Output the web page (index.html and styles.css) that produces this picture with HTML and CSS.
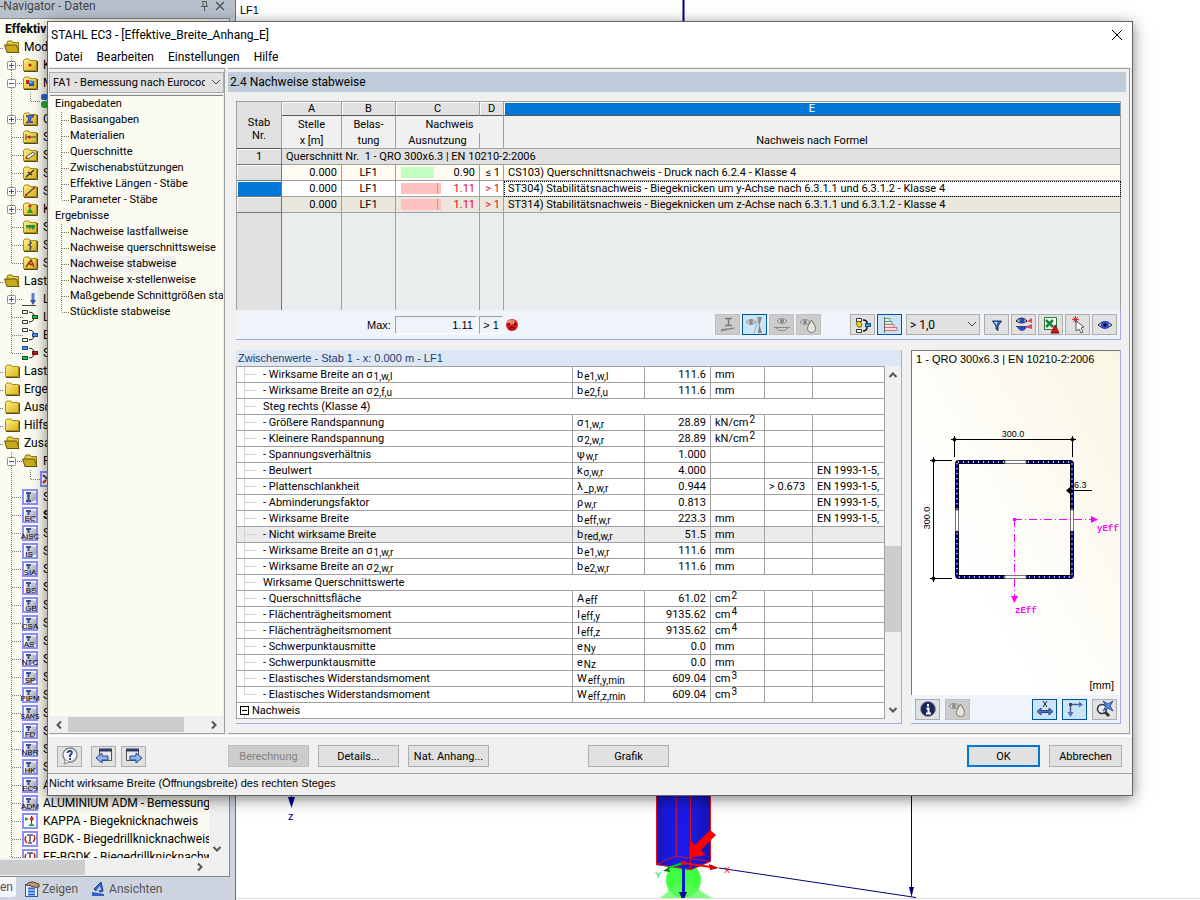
FILE: index.html
```html
<!DOCTYPE html>
<html lang="de">
<head>
  <meta charset="UTF-8">
  <meta name="viewport" content="width=device-width, initial-scale=1.0">
  <title>STAHL EC3</title>
  <link rel="stylesheet" href="styles.css">
</head>
<body>
  <!-- shared icons -->
  <svg class="defs" width="0" height="0">
    <defs>
      <linearGradient id="gold" x1="0" y1="0" x2="1" y2="1"><stop offset="0" stop-color="#fff08a"/><stop offset="1" stop-color="#d8b41c"/></linearGradient>
      <linearGradient id="metal" x1="0" y1="0" x2="1" y2="1"><stop offset="0" stop-color="#f4f6fa"/><stop offset="1" stop-color="#9498a4"/></linearGradient>
      <symbol id="tee" viewBox="0 0 24 18"><path d="M11.500 0V18M12 9.500H23" fill="none" stroke="#777" stroke-dasharray="1 1"/></symbol>
      <symbol id="end" viewBox="0 0 24 18"><path d="M11.500 0V9M12 9.500H23" fill="none" stroke="#777" stroke-dasharray="1 1"/></symbol>
      <symbol id="plus" viewBox="0 0 24 18"><path d="M11.500 0V18M17 9.500H23" fill="none" stroke="#777" stroke-dasharray="1 1"/><rect x="7.500" y="5.500" width="8" height="8" rx="1" fill="#fff" stroke="#8c8c8c"/><path d="M9 9.500H14M11.500 7V12" stroke="#3a52a4"/></symbol>
      <symbol id="minus" viewBox="0 0 24 18"><path d="M11.500 0V18M17 9.500H23" fill="none" stroke="#777" stroke-dasharray="1 1"/><rect x="7.500" y="5.500" width="8" height="8" rx="1" fill="#fff" stroke="#8c8c8c"/><path d="M9 9.500H14" stroke="#3a52a4"/></symbol>
      <symbol id="sub" viewBox="0 0 42 18"><path d="M11.500 0V18M30.500 0V9M31 9.500H41" fill="none" stroke="#777" stroke-dasharray="1 1"/></symbol>
      <symbol id="stub" viewBox="0 0 4 18"><path d="M0 10.500H4" stroke="#777" stroke-dasharray="1 1"/></symbol>
      <symbol id="t-tee" viewBox="0 0 20 16"><path d="M11.500 0V16M12 8.500H19" fill="none" stroke="#777" stroke-dasharray="1 1"/></symbol>
      <symbol id="t-end" viewBox="0 0 20 16"><path d="M11.500 0V8M12 8.500H19" fill="none" stroke="#777" stroke-dasharray="1 1"/></symbol>
      <symbol id="g-tee" viewBox="0 0 26 15"><path d="M7.500 0V15M8 7.500H19" fill="none" stroke="#d4d4d4"/></symbol>
      <symbol id="g-end" viewBox="0 0 26 15"><path d="M7.500 0V7.500H19" fill="none" stroke="#d4d4d4"/></symbol>
      <symbol id="folder" viewBox="0 0 16 16"><path d="M1.500 13.500V3.500L3 2H7L8 3.500H14.500V13.500Z" fill="url(#gold)" stroke="#a88c18"/><path d="M2 14.500H15.500V4" fill="none" stroke="#554a20"/></symbol>
      <symbol id="open" viewBox="0 0 16 16"><path d="M3 3.500L4 2H8L9 3.500H14.500V13H3Z" fill="#e8cc48" stroke="#8c7614"/><path d="M0.500 6H12.500L15 13.500H3Z" fill="#c8aa1c" stroke="#64540c"/></symbol>
      <symbol id="std" viewBox="0 0 16 16"><rect x="1" y="1" width="14" height="14" fill="#fff" stroke="#8e8efa" stroke-width="2"/><path d="M3 4L9 2.500L14 4V11L8 14H4Z" fill="url(#metal)"/><path d="M4 4H9M6.500 4V8" stroke="#3c5484" stroke-width="2"/></symbol>
      <symbol id="combi" viewBox="0 0 16 16"><path d="M0.500 1.500H5.500V4.500H0.500ZM0.500 11.500H5.500V14.500H0.500Z" fill="#fff" stroke="#333"/><path d="M7 3Q11 3 12 6M7 13Q11 13 12 10" fill="none" stroke="#222"/></symbol>
      <symbol id="eye" viewBox="0 0 18 18"><path d="M2 9Q9 2 16 9Q9 15 2 9Z" fill="#c8d0f8" stroke="#223"/><circle cx="9" cy="9" r="4" fill="#2c4cc8"/><circle cx="9" cy="9" r="1.500" fill="#001"/></symbol>
      <symbol id="geye" viewBox="0 0 18 18"><path d="M0 6Q5 1 10 6Q5 11 0 6Z" fill="#ddd" stroke="#888"/><circle cx="5" cy="6" r="2" fill="#888"/></symbol>
      <symbol id="drop" viewBox="0 0 18 18"><path d="M0 6Q5 1 10 6Q5 11 0 6Z" fill="#ddd" stroke="#888"/><circle cx="5" cy="6" r="2" fill="#888"/><path d="M11.500 4L15 10Q17 16 11.500 16.500Q6 16 8 10Z" fill="#e6e6dc" stroke="#77776c"/></symbol>
      <symbol id="chev" viewBox="0 0 10 10"><path d="M1 3L5 7L9 3" fill="none" stroke="#444"/></symbol>
      <symbol id="down" viewBox="0 0 10 10"><path d="M1.500 3L5 6.500L8.500 3" fill="none" stroke="#555" stroke-width="2"/></symbol>
      <symbol id="up" viewBox="0 0 10 10"><path d="M1.500 7L5 3.500L8.500 7" fill="none" stroke="#555" stroke-width="2"/></symbol>
      <symbol id="left" viewBox="0 0 10 10"><path d="M7 1.500L3.500 5L7 8.500" fill="none" stroke="#555" stroke-width="2"/></symbol>
      <symbol id="right" viewBox="0 0 10 10"><path d="M3 1.500L6.500 5L3 8.500" fill="none" stroke="#555" stroke-width="2"/></symbol>
    </defs>
  </svg>

  <aside class="navigator">
    <header class="nav-title">
      <span>-Navigator - Daten</span>
      <svg width="26" height="12" viewBox="0 0 26 12"><path d="M3 1.500H8M4 1V6M7.500 1V6M2 6.500H9M5.500 7V11" fill="none" stroke="#555"/><path d="M17 2L25 10M25 2L17 10" stroke="#555" stroke-width="1.500"/></svg>
    </header>
    <div class="nav-frame">
      <div class="nav-main">
        <ul class="nav-tree">
          <li class="root-name">Effektiv</li>
          <li><svg class="stub"><use href="#stub"/></svg><svg class="icon"><use href="#open"/></svg>Mod</li>
          <li><svg class="twig"><use href="#plus"/></svg><svg class="icon" viewBox="0 0 16 16"><use href="#folder"/><circle cx="8" cy="8" r="1.500" fill="#d01010"/></svg>K</li>
          <li><svg class="twig"><use href="#minus"/></svg><svg class="icon" viewBox="0 0 16 16"><use href="#folder"/><path d="M4 5H7V9H4Z" fill="#d02020"/><path d="M7 6H12V11H7Z" fill="#2848d0"/><circle cx="9" cy="7" r="2" fill="#40b0e0"/></svg>M</li>
          <li><svg class="twig deep"><use href="#sub"/></svg><svg class="icon" viewBox="0 0 16 16"><rect x="1" y="1" width="7" height="6" rx="2" fill="#2c64d8"/><rect x="1" y="8" width="8" height="7" rx="3" fill="#20b030"/></svg></li>
          <li><svg class="twig"><use href="#plus"/></svg><svg class="icon" viewBox="0 0 16 16"><use href="#folder"/><path d="M4 5L12 4L11 6L9 7L8 10L11 11L4 12L6 10L7 7Z" fill="#5a78e8" stroke="#2838a0"/></svg>Q</li>
          <li><svg class="twig"><use href="#tee"/></svg><svg class="icon" viewBox="0 0 16 16"><use href="#folder"/><path d="M4 5V11M4 8H7M9 8H14" stroke="#444"/><circle cx="7.500" cy="8" r="1.500" fill="#c02020"/></svg>S</li>
          <li><svg class="twig"><use href="#tee"/></svg><svg class="icon" viewBox="0 0 16 16"><use href="#folder"/><path d="M4 10L11 5L13 7L6 12Z" fill="#fff" stroke="#555"/><circle cx="4.500" cy="11" r="1" fill="#c02020"/></svg>S</li>
          <li><svg class="twig"><use href="#tee"/></svg><svg class="icon" viewBox="0 0 16 16"><use href="#folder"/><path d="M4 12L12 5M6 7L10 10" stroke="#333" stroke-width="1.500"/></svg>S</li>
          <li><svg class="twig"><use href="#plus"/></svg><svg class="icon" viewBox="0 0 16 16"><use href="#folder"/><path d="M4 12L12 5" stroke="#555" stroke-width="1.500"/><path d="M3 11H5V13H3ZM11 4H13V6H11Z" fill="#c02020"/></svg>S</li>
          <li><svg class="twig"><use href="#plus"/></svg><svg class="icon" viewBox="0 0 16 16"><use href="#folder"/><path d="M8 6L11 12H5Z" fill="#28a038"/><circle cx="8" cy="5" r="1.500" fill="#c02020"/></svg>K</li>
          <li><svg class="twig"><use href="#tee"/></svg><svg class="icon" viewBox="0 0 16 16"><use href="#folder"/><path d="M4 6H13V8L11 11L9 8L8 11L6 8L5 11Z" fill="#28903c"/></svg>S</li>
          <li><svg class="twig"><use href="#tee"/></svg><svg class="icon" viewBox="0 0 16 16"><use href="#folder"/><path d="M8 4L9 6L7 8L9 10L8 13" fill="none" stroke="#446" stroke-width="1.500"/></svg>S</li>
          <li><svg class="twig"><use href="#end"/></svg><svg class="icon" viewBox="0 0 16 16"><use href="#folder"/><path d="M4 12L9 5L12 12M6 8L10 10" fill="none" stroke="#a03020" stroke-width="1.500"/></svg>S</li>
          <li><svg class="stub"><use href="#stub"/></svg><svg class="icon"><use href="#open"/></svg>Lastf</li>
          <li><svg class="twig"><use href="#plus"/></svg><svg class="icon" viewBox="0 0 16 16"><path d="M0 14.500H14" stroke="#444"/><path d="M11 2V9" stroke="#5c80d8" stroke-width="3"/><path d="M8 9H14L11 14Z" fill="#3454a8"/></svg>L</li>
          <li><svg class="twig"><use href="#tee"/></svg><svg class="icon" viewBox="0 0 16 16"><use href="#combi"/><rect x="10.500" y="6.500" width="5" height="3" fill="#20c040" stroke="#145020"/></svg>L</li>
          <li><svg class="twig"><use href="#tee"/></svg><svg class="icon" viewBox="0 0 16 16"><use href="#combi"/><rect x="10.500" y="6.500" width="5" height="3" fill="#4c90f0" stroke="#204890"/></svg>E</li>
          <li><svg class="twig"><use href="#end"/></svg><svg class="icon" viewBox="0 0 16 16"><use href="#combi"/><rect x="0.500" y="1.500" width="5" height="3" fill="#4c90f0" stroke="#204890"/><rect x="0.500" y="11.500" width="5" height="3" fill="#20c040" stroke="#145020"/><rect x="10.500" y="6.500" width="5" height="3" fill="#d01020" stroke="#701010"/></svg>S</li>
          <li><svg class="stub"><use href="#stub"/></svg><svg class="icon"><use href="#folder"/></svg>Laste</li>
          <li><svg class="stub"><use href="#stub"/></svg><svg class="icon"><use href="#folder"/></svg>Erge</li>
          <li><svg class="stub"><use href="#stub"/></svg><svg class="icon"><use href="#folder"/></svg>Ausd</li>
          <li><svg class="stub"><use href="#stub"/></svg><svg class="icon"><use href="#folder"/></svg>Hilfs</li>
          <li><svg class="stub"><use href="#stub"/></svg><svg class="icon"><use href="#open"/></svg>Zusa</li>
          <li><svg class="twig"><use href="#minus"/></svg><svg class="icon"><use href="#open"/></svg>F</li>
          <li><svg class="twig deep"><use href="#sub"/></svg><svg class="icon" viewBox="0 0 16 16"><rect x="1" y="1" width="14" height="14" fill="#fff" stroke="#8e8efa" stroke-width="2"/><path d="M3 4L12 12" stroke="#446" stroke-width="2"/><path d="M3 12L6 9" stroke="#c02020" stroke-width="2"/></svg></li>
          <li><svg class="twig"><use href="#tee"/></svg><svg class="icon" viewBox="0 0 16 16"><use href="#std"/><path d="M4 12H9M6.500 5V12" stroke="#3c5484" stroke-width="2"/></svg>S</li>
          <li><svg class="twig"><use href="#tee"/></svg><svg class="icon" viewBox="0 0 16 16"><use href="#std"/><text x="8" y="14">EC</text></svg><b>S</b></li>
          <li><svg class="twig"><use href="#tee"/></svg><svg class="icon" viewBox="0 0 16 16"><use href="#std"/><text x="8" y="14">AISC</text></svg>S</li>
          <li><svg class="twig"><use href="#tee"/></svg><svg class="icon" viewBox="0 0 16 16"><use href="#std"/><text x="7" y="14">IS</text></svg>S</li>
          <li><svg class="twig"><use href="#tee"/></svg><svg class="icon" viewBox="0 0 16 16"><use href="#std"/><text x="8" y="14">SIA</text></svg>S</li>
          <li><svg class="twig"><use href="#tee"/></svg><svg class="icon" viewBox="0 0 16 16"><use href="#std"/><text x="9" y="14">BS</text></svg>S</li>
          <li><svg class="twig"><use href="#tee"/></svg><svg class="icon" viewBox="0 0 16 16"><use href="#std"/><text x="9" y="14">GB</text></svg>S</li>
          <li><svg class="twig"><use href="#tee"/></svg><svg class="icon" viewBox="0 0 16 16"><use href="#std"/><text x="8" y="14">CSA</text></svg>S</li>
          <li><svg class="twig"><use href="#tee"/></svg><svg class="icon" viewBox="0 0 16 16"><use href="#std"/><text x="7" y="14">AS</text></svg>S</li>
          <li><svg class="twig"><use href="#tee"/></svg><svg class="icon" viewBox="0 0 16 16"><use href="#std"/><text x="8" y="14">NTC</text></svg>S</li>
          <li><svg class="twig"><use href="#tee"/></svg><svg class="icon" viewBox="0 0 16 16"><use href="#std"/><text x="8" y="14">SP</text></svg>S</li>
          <li><svg class="twig"><use href="#tee"/></svg><svg class="icon" viewBox="0 0 16 16"><use href="#std"/><text x="8" y="14">PIFM</text></svg>S</li>
          <li><svg class="twig"><use href="#tee"/></svg><svg class="icon" viewBox="0 0 16 16"><use href="#std"/><text class="long" x="8" y="14">SANS</text></svg>S</li>
          <li><svg class="twig"><use href="#tee"/></svg><svg class="icon" viewBox="0 0 16 16"><use href="#std"/><text x="8" y="14">FD</text></svg>S</li>
          <li><svg class="twig"><use href="#tee"/></svg><svg class="icon" viewBox="0 0 16 16"><use href="#std"/><text x="8" y="14">NBR</text></svg>S</li>
          <li><svg class="twig"><use href="#tee"/></svg><svg class="icon" viewBox="0 0 16 16"><use href="#std"/><text x="8" y="14">HK</text></svg>S</li>
          <li><svg class="twig"><use href="#tee"/></svg><svg class="icon" viewBox="0 0 16 16"><use href="#std"/><text x="8" y="14">EC9</text></svg>A</li>
          <li><svg class="twig"><use href="#tee"/></svg><svg class="icon" viewBox="0 0 16 16"><use href="#std"/><text x="8" y="14">ADM</text></svg>ALUMINIUM ADM - Bemessung</li>
          <li><svg class="twig"><use href="#tee"/></svg><svg class="icon" viewBox="0 0 16 16"><rect x="1" y="1" width="14" height="14" fill="#fff" stroke="#8e8efa" stroke-width="2"/><path d="M3 4L7 6L3 8Z" fill="#20a040"/><path d="M9.500 3V12" stroke="#333"/><path d="M8 5L10 3L12 6L10 8L8 7Z" fill="#d02020"/><path d="M6 13L9.500 10L13 13Z" fill="#20a040"/></svg>KAPPA - Biegeknicknachweis</li>
          <li><svg class="twig"><use href="#tee"/></svg><svg class="icon" viewBox="0 0 16 16"><rect x="1" y="1" width="14" height="14" fill="#fff" stroke="#8e8efa" stroke-width="2"/><path d="M5 4H11M8 4V11M6 12H10" stroke="#555" stroke-width="1.500"/><path d="M4 5Q2 9 5 12M12 4Q14 8 11 11" fill="none" stroke="#c02020" stroke-width="1.500"/></svg>BGDK - Biegedrillknicknachweis</li>
          <li><svg class="twig"><use href="#tee"/></svg><svg class="icon" viewBox="0 0 16 16"><rect x="1" y="1" width="14" height="14" fill="#fff" stroke="#8e8efa" stroke-width="2"/><path d="M5 4H11M8 4V11M6 12H10" stroke="#555" stroke-width="1.500"/><path d="M4 5Q2 9 5 12M12 4Q14 8 11 11" fill="none" stroke="#c02020" stroke-width="1.500"/></svg>FE-BGDK - Biegedrillknicknachweis</li>
        </ul>
        <div class="nav-vscroll"><svg class="arrow"><use href="#down"/></svg></div>
      </div>
      <div class="nav-hscroll"><span class="thumb"></span><svg class="arrow"><use href="#right"/></svg></div>
    </div>
    <nav class="nav-tabs">
      <a class="tab active" href="#daten">en</a>
      <a class="tab" href="#zeigen"><svg width="16" height="16" viewBox="0 0 16 16"><rect x="1.500" y="3.500" width="12" height="12" fill="#e8f0fc" stroke="#2858b8"/><path d="M4 7.500H11M4 10.500H11M4 13.500H11" stroke="#2868d8" stroke-width="2"/><path d="M2 4Q5 0 9 1L15 3V6Q10 7 7 5Z" fill="#c09870" stroke="#504030"/></svg>Zeigen</a>
      <a class="tab" href="#ansichten"><svg width="16" height="16" viewBox="0 0 16 16"><path d="M3 8L10 1L12 10L9 11L7 8L5 10Z" fill="#3868d0" stroke="#183880"/><path d="M1 11L13 13V15H1Z" fill="#3060c0"/><path d="M5 10L9 5L10 9Z" fill="#c0d4f8"/></svg>Ansichten</a>
    </nav>
  </aside>

  <main class="workspace">
    <svg class="model" viewBox="236 0 964 900" preserveAspectRatio="xMinYMin slice">
      <defs>
        <linearGradient id="steel" x1="0" x2="1" y1="0" y2="0"><stop offset="0" stop-color="#1616c4"/><stop offset=".4" stop-color="#1a1aea"/><stop offset=".63" stop-color="#1a1ae0"/><stop offset="1" stop-color="#1414b4"/></linearGradient>
      </defs>
      <path d="M683.500 0V22" stroke="#000080" stroke-width="2"/>
      <path d="M291.500 790V800" stroke="#0000a0"/><path d="M288 797H295L291.500 808Z" fill="#0000a0"/>
      <path d="M683 880L712 898H660Z" fill="#80ff80"/>
      <circle cx="683.500" cy="880" r="17.500" fill="#40ff40"/>
      <path d="M683 882L700 890Q684 900 667 890Z" fill="#58f858"/>
      <path d="M656 790H711V861L691 870L656 865Z" fill="url(#steel)"/>
      <path d="M656.500 790V864.500L676 856L710.500 861.500L691 869.500L656.500 864.500M676.500 790V856M690.500 790V869M710.500 790V861" fill="none" stroke="#e01020"/>
      <path d="M676 790V856" stroke="#8c1878"/>
      <path d="M683 863L668 868" stroke="#00d000" stroke-width="2"/><path d="M663 871L669 867L670 872Z" fill="#008000"/>
      <path d="M683.500 864V892" stroke="#0020c0" stroke-width="3"/><path d="M679 892H687L684 899H682Z" fill="#0000a0"/>
      <path d="M683 863L711 867" stroke="#f00" stroke-width="2"/><path d="M709 864L719 868L710 870Z" fill="#c00000"/><rect x="681" y="861" width="4" height="4" fill="#f00"/>
      <path d="M719 868L916 897.500M911.500 790V888" fill="none" stroke="#000080"/><path d="M909 887H914L911.500 897Z" fill="#000080"/>
      <path d="M710 830L716 835L701 850L706 855L689 858L690 840L695 845Z" fill="#f00"/>
      <path d="M236 898.500H1200" stroke="#ddd"/>
      <text x="240" y="14" fill="#000">LF1</text>
      <text x="288" y="820" fill="#0000a0">z</text>
      <text x="655" y="878" class="axis" fill="#0d0">Y</text>
      <text x="724" y="873" class="axis" fill="#f00">X</text>
    </svg>
  </main>

  <section class="dialog">
    <header class="titlebar">
      <h1>STAHL EC3 - [Effektive_Breite_Anhang_E]</h1>
      <button class="close" aria-label="Schließen"><svg width="12" height="12" viewBox="0 0 12 12"><path d="M1 1L11 11M11 1L1 11" stroke="#000"/></svg></button>
    </header>
    <nav class="menu">
      <a href="#datei">Datei</a>
      <a href="#bearbeiten">Bearbeiten</a>
      <a href="#einstellungen">Einstellungen</a>
      <a href="#hilfe">Hilfe</a>
    </nav>

    <div class="dialog-body">
      <div class="side">
        <div class="combo">
          <select aria-label="Bemessungsfall"><option>FA1 - Bemessung nach Eurocod</option></select>
          <svg class="chev"><use href="#chev"/></svg>
        </div>
        <div class="side-panel">
          <ul class="side-tree">
            <li class="group">Eingabedaten</li>
            <li><svg><use href="#t-tee"/></svg><span>Basisangaben</span></li>
            <li><svg><use href="#t-tee"/></svg><span>Materialien</span></li>
            <li><svg><use href="#t-tee"/></svg><span>Querschnitte</span></li>
            <li><svg><use href="#t-tee"/></svg><span>Zwischenabstützungen</span></li>
            <li><svg><use href="#t-tee"/></svg><span>Effektive Längen - Stäbe</span></li>
            <li><svg><use href="#t-end"/></svg><span>Parameter - Stäbe</span></li>
            <li class="group">Ergebnisse</li>
            <li><svg><use href="#t-tee"/></svg><span>Nachweise lastfallweise</span></li>
            <li><svg><use href="#t-tee"/></svg><span>Nachweise querschnittsweise</span></li>
            <li><svg><use href="#t-tee"/></svg><span class="current">Nachweise stabweise</span></li>
            <li><svg><use href="#t-tee"/></svg><span>Nachweise x-stellenweise</span></li>
            <li><svg><use href="#t-tee"/></svg><span>Maßgebende Schnittgrößen stabweise</span></li>
            <li><svg><use href="#t-end"/></svg><span>Stückliste stabweise</span></li>
          </ul>
          <div class="side-scroll">
            <svg class="arrow"><use href="#left"/></svg>
            <div class="track"><span class="thumb"></span></div>
            <svg class="arrow"><use href="#right"/></svg>
          </div>
        </div>
      </div>

      <div class="content">
        <h2 class="page-title">2.4 Nachweise stabweise</h2>

        <div class="checks">
          <table class="check-table">
            <colgroup><col class="c-nr"><col class="c-a"><col class="c-b"><col class="c-c"><col class="c-d"><col></colgroup>
            <thead>
              <tr class="letters">
                <th rowspan="3" class="corner">Stab<br>Nr.</th>
                <th>A</th><th>B</th><th>C</th><th>D</th><th class="picked">E</th>
              </tr>
              <tr class="names top"><th>Stelle</th><th>Belas-</th><th colspan="2">Nachweis</th><th></th></tr>
              <tr class="names"><th>x [m]</th><th>tung</th><th>Ausnutzung</th><th></th><th>Nachweis nach Formel</th></tr>
            </thead>
            <tbody>
              <tr class="section"><th>1</th><td colspan="5">Querschnitt Nr.&nbsp; 1 - QRO 300x6.3 | EN 10210-2:2006</td></tr>
              <tr class="cream"><th></th><td class="num">0.000</td><td class="mid">LF1</td><td><div class="ratio"><span class="bar ok" style="width: 33px"></span>0.90</div></td><td class="limit">≤ 1</td><td>CS103) Querschnittsnachweis - Druck nach 6.2.4 - Klasse 4</td></tr>
              <tr class="active"><th></th><td class="num">0.000</td><td class="mid">LF1</td><td><div class="ratio bad"><span class="bar over" style="width: 40px"></span>1.11</div></td><td class="limit bad">&gt; 1</td><td class="focus">ST304) Stabilitätsnachweis - Biegeknicken um y-Achse nach 6.3.1.1 und 6.3.1.2 - Klasse 4</td></tr>
              <tr class="beige"><th></th><td class="num">0.000</td><td class="mid">LF1</td><td><div class="ratio bad"><span class="bar over" style="width: 40px"></span>1.11</div></td><td class="limit bad">&gt; 1</td><td>ST314) Stabilitätsnachweis - Biegeknicken um z-Achse nach 6.3.1.1 und 6.3.1.2 - Klasse 4</td></tr>
              <tr class="rest"><th></th><td></td><td></td><td></td><td></td><td></td></tr>
            </tbody>
          </table>
          <div class="check-bar">
            <div class="max">
              <label for="max">Max:</label>
              <input id="max" class="max-value" value="1.11" readonly>
              <input class="max-limit" aria-label="Grenzwert" value="&gt; 1" readonly>
              <svg width="14" height="14" viewBox="0 0 14 14"><circle cx="7" cy="7" r="6" fill="#d81818"/><ellipse cx="6" cy="4" rx="4" ry="2.500" fill="#f08070"/><path d="M4 5V7M10 5V7" stroke="#300" stroke-width="1.500"/><path d="M4 10.500Q7 7.500 10 10.500" fill="none" stroke="#300"/></svg>
            </div>
            <div class="tools">
              <button class="tool off" disabled aria-label="Querschnitt"><svg viewBox="0 0 18 18"><path d="M6 2.500H13M9.500 2V9M6 9.500H13" stroke="#777" stroke-width="1.500"/><path d="M2 13V15.500L16 12.500V11.500Z" fill="#888"/></svg></button>
              <button class="tool on" aria-label="Stab"><svg viewBox="0 0 18 18"><use href="#geye"/><path d="M11 1H16L13.500 9L16 17H12L13 9Z" fill="#888"/><path d="M8 17L13 1" stroke="#aaa"/></svg></button>
              <button class="tool off" disabled aria-label="Stelle"><svg viewBox="0 0 18 18"><path d="M4 5Q9 0 14 5Q9 10 4 5Z" fill="#ddd" stroke="#888"/><circle cx="9" cy="5" r="2" fill="#888"/><path d="M1 11.500H17M3 12Q9 18 15 12" fill="none" stroke="#888"/></svg></button>
              <button class="tool off" disabled aria-label="Farben"><svg viewBox="0 0 18 18"><use href="#drop"/></svg></button>
            </div>
            <div class="tools wide">
              <button class="tool" aria-label="Kombinationen"><svg viewBox="0 0 18 18"><path d="M2.500 2.500H7.500V5.500H2.500ZM2.500 13.500H7.500V16.500H2.500Z" fill="#fff" stroke="#333"/><path d="M2 7L5 5L8 8L7 11H4Z" fill="#f0d820" stroke="#776600"/><path d="M9 4Q13 4 13 7M9 15Q13 15 13 11" fill="none" stroke="#111" stroke-width="1.500"/><rect x="11.500" y="7.500" width="5" height="3" fill="#30a0e8" stroke="#185080"/></svg></button>
              <button class="tool on" aria-label="Balken"><svg viewBox="0 0 18 18"><path d="M3.500 1V17" stroke="#666"/><path d="M4 2.500H9V5.500H4M9 5.500H11V8.500H4" fill="#d8f4e4" stroke="#60a880"/><path d="M4 8.500H13V11.500H4M4 11.500H16V14.500H4" fill="#fcdcdc" stroke="#c87080"/></svg></button>
            </div>
            <div class="combo filter">
              <select aria-label="Filter"><option>&gt; 1,0</option></select>
              <svg class="chev"><use href="#chev"/></svg>
            </div>
            <div class="tools">
              <button class="tool" aria-label="Filtern"><svg viewBox="0 0 18 18"><path d="M4.500 5H13.500L10 10V14.500L8 13V10Z" fill="#3c6cc8" stroke="#183468"/><path d="M6 6H9L9 9Z" fill="#d0e0ff"/></svg></button>
              <button class="tool" aria-label="Verlauf"><svg viewBox="0 0 18 18"><path d="M1 5Q7 -1 12 5Q7 9 1 5Z" fill="#c8d0f8" stroke="#112"/><circle cx="7" cy="4.500" r="2.500" fill="#2848c0"/><path d="M1 10.500H17" stroke="#444"/><path d="M2 11H12Q7 19 2 11Z" fill="#2c48d8"/><path d="M12 5L17 2V7ZM10 11L17 8V13Z" fill="#e04848"/></svg></button>
              <button class="tool" aria-label="Excel"><svg viewBox="0 0 18 18"><path d="M2.500 1.500H14.500V13.500H2.500Z" fill="#f4fff4" stroke="#287838"/><path d="M4 4L11 11M11 4L4 11" stroke="#208038" stroke-width="2.500"/><path d="M13 9L17 17H9Z" fill="#d01818" stroke="#801010"/></svg></button>
              <button class="tool" aria-label="Auswahl"><svg viewBox="0 0 18 18"><path d="M4 1L9 6M9 1L4 6M6.500 0V7M3 3.500H10" stroke="#d03030"/><path d="M7 5L15 11L12 12L14 16L12 17L10 13L7 15Z" fill="#fff" stroke="#555"/></svg></button>
              <button class="tool" aria-label="Ansicht"><svg viewBox="0 0 18 18"><use href="#eye"/></svg></button>
            </div>
          </div>
        </div>

        <div class="lower">
          <div class="details">
            <h3>Zwischenwerte - Stab 1 - x: 0.000 m - LF1</h3>
            <div class="details-body">
              <table class="value-table">
                <colgroup><col><col class="v-sym"><col class="v-num"><col class="v-unit"><col class="v-lim"><col class="v-ref"></colgroup>
                <tbody>
                  <tr><td><svg><use href="#g-tee"/></svg>- Wirksame Breite an σ<sub>1,w,l</sub></td><td>b<sub>e1,w,l</sub></td><td>111.6</td><td>mm</td><td></td><td></td></tr>
                  <tr><td><svg><use href="#g-tee"/></svg>- Wirksame Breite an σ<sub>2,f,u</sub></td><td>b<sub>e2,f,u</sub></td><td>111.6</td><td>mm</td><td></td><td></td></tr>
                  <tr><td colspan="6"><svg><use href="#g-tee"/></svg>Steg rechts (Klasse 4)</td></tr>
                  <tr><td><svg><use href="#g-tee"/></svg>- Größere Randspannung</td><td>σ<sub>1,w,r</sub></td><td>28.89</td><td>kN/cm<sup>2</sup></td><td></td><td></td></tr>
                  <tr><td><svg><use href="#g-tee"/></svg>- Kleinere Randspannung</td><td>σ<sub>2,w,r</sub></td><td>28.89</td><td>kN/cm<sup>2</sup></td><td></td><td></td></tr>
                  <tr><td><svg><use href="#g-tee"/></svg>- Spannungsverhältnis</td><td>ψ<sub>w,r</sub></td><td>1.000</td><td></td><td></td><td></td></tr>
                  <tr><td><svg><use href="#g-tee"/></svg>- Beulwert</td><td>k<sub>σ,w,r</sub></td><td>4.000</td><td></td><td></td><td>EN 1993-1-5,</td></tr>
                  <tr><td><svg><use href="#g-tee"/></svg>- Plattenschlankheit</td><td>λ<sub>_p,w,r</sub></td><td>0.944</td><td></td><td>&gt; 0.673</td><td>EN 1993-1-5,</td></tr>
                  <tr><td><svg><use href="#g-tee"/></svg>- Abminderungsfaktor</td><td>ρ<sub>w,r</sub></td><td>0.813</td><td></td><td></td><td>EN 1993-1-5,</td></tr>
                  <tr><td><svg><use href="#g-tee"/></svg>- Wirksame Breite</td><td>b<sub>eff,w,r</sub></td><td>223.3</td><td>mm</td><td></td><td>EN 1993-1-5,</td></tr>
                  <tr class="marked"><td><svg><use href="#g-tee"/></svg>- Nicht wirksame Breite</td><td>b<sub>red,w,r</sub></td><td>51.5</td><td>mm</td><td></td><td></td></tr>
                  <tr><td><svg><use href="#g-tee"/></svg>- Wirksame Breite an σ<sub>1,w,r</sub></td><td>b<sub>e1,w,r</sub></td><td>111.6</td><td>mm</td><td></td><td></td></tr>
                  <tr><td><svg><use href="#g-tee"/></svg>- Wirksame Breite an σ<sub>2,w,r</sub></td><td>b<sub>e2,w,r</sub></td><td>111.6</td><td>mm</td><td></td><td></td></tr>
                  <tr><td colspan="6"><svg><use href="#g-tee"/></svg>Wirksame Querschnittswerte</td></tr>
                  <tr><td><svg><use href="#g-tee"/></svg>- Querschnittsfläche</td><td>A<sub>eff</sub></td><td>61.02</td><td>cm<sup>2</sup></td><td></td><td></td></tr>
                  <tr><td><svg><use href="#g-tee"/></svg>- Flächenträgheitsmoment</td><td>I<sub>eff,y</sub></td><td>9135.62</td><td>cm<sup>4</sup></td><td></td><td></td></tr>
                  <tr><td><svg><use href="#g-tee"/></svg>- Flächenträgheitsmoment</td><td>I<sub>eff,z</sub></td><td>9135.62</td><td>cm<sup>4</sup></td><td></td><td></td></tr>
                  <tr><td><svg><use href="#g-tee"/></svg>- Schwerpunktausmitte</td><td>e<sub>Ny</sub></td><td>0.0</td><td>mm</td><td></td><td></td></tr>
                  <tr><td><svg><use href="#g-tee"/></svg>- Schwerpunktausmitte</td><td>e<sub>Nz</sub></td><td>0.0</td><td>mm</td><td></td><td></td></tr>
                  <tr><td><svg><use href="#g-tee"/></svg>- Elastisches Widerstandsmoment</td><td>W<sub>eff,y,min</sub></td><td>609.04</td><td>cm<sup>3</sup></td><td></td><td></td></tr>
                  <tr><td><svg><use href="#g-end"/></svg>- Elastisches Widerstandsmoment</td><td>W<sub>eff,z,min</sub></td><td>609.04</td><td>cm<sup>3</sup></td><td></td><td></td></tr>
                  <tr><td colspan="6"><svg class="box" viewBox="0 0 15 15"><path d="M7.500 12V15" stroke="#d4d4d4"/><rect x="3.500" y="3.500" width="8" height="8" fill="#fff" stroke="#000"/><path d="M5 7.500H10" stroke="#000"/></svg>Nachweis</td></tr>
                </tbody>
              </table>
              <div class="vscroll">
                <svg class="arrow"><use href="#up"/></svg>
                <div class="track"><span class="thumb"></span></div>
                <svg class="arrow"><use href="#down"/></svg>
              </div>
            </div>
          </div>

          <div class="profile">
            <div class="profile-view">
              <h3>1 - QRO 300x6.3 | EN 10210-2:2006</h3>
              <svg class="drawing" viewBox="912 367 208 310">
                <g stroke="#000" fill="none">
                  <path d="M951 439.500H1076M954.500 436V457M1072.500 436V457"/>
                  <path d="M933.500 457V582M930 460.500H952M930 578.500H952"/>
                  <path d="M1067 490.500H1092"/>
                </g>
                <path d="M952 439.500L954.500 437L957 439.500L954.500 442ZM1070 439.500L1072.500 437L1075 439.500L1072.500 442ZM931 460.500L933.500 458L936 460.500L933.500 463ZM931 578.500L933.500 576L936 578.500L933.500 581Z"/>
                <rect x="957" y="462" width="115" height="115" rx="2" fill="none" stroke="#000" stroke-width="4"/>
                <rect x="957" y="462" width="115" height="115" rx="1" fill="none" stroke="#00008c" stroke-width="2"/>
                <rect x="957" y="462" width="115" height="115" rx="1" fill="none" stroke="#c8d0ff" stroke-width="2" stroke-dasharray="1 4"/>
                <g fill="#fff" stroke="#777"><path d="M1005 460.500H1026V463.500H1005ZM1005 575.500H1026V578.500H1005ZM955.500 510H958.500V531H955.500ZM1070.500 510H1073.500V531H1070.500Z"/></g>
                <path d="M1066 490.500L1070 487L1073 490.500L1070 494Z"/>
                <g stroke="#f0f" fill="none" stroke-dasharray="8 3 1 3"><path d="M1014 519.500H1091M1014.500 519V597"/></g>
                <path d="M1091 516L1098 519.500L1091 523ZM1011 596H1018L1014.500 603ZM1013 518H1016V521H1013Z" fill="#f0f"/>
                <text x="1013" y="437" text-anchor="middle">300.0</text>
                <text x="0" y="0" text-anchor="middle" transform="translate(930 518) rotate(-90)">300.0</text>
                <text x="1074" y="488">6.3</text>
                <text class="ax" x="1097" y="531">yEff</text>
                <text class="ax" x="1015" y="613">zEff</text>
              </svg>
              <p>[mm]</p>
            </div>
            <div class="profile-bar">
              <button class="tool" aria-label="Info"><svg viewBox="0 0 18 18"><circle cx="9" cy="9" r="7.500" fill="#182858" stroke="#8890a8"/><path d="M9 4V6.500M7.500 8.500H9.500V13M7 13.500H12" fill="none" stroke="#fff" stroke-width="2"/></svg></button>
              <button class="tool off" disabled aria-label="Farben"><svg viewBox="0 0 18 18"><use href="#drop"/></svg></button>
              <span class="space"></span>
              <button class="tool on" aria-label="Bemaßung"><svg viewBox="0 0 18 18"><path d="M7 1L11 7M11 1L7 7" stroke="#222"/><path d="M1 11.500L5 8V10.500H13V8L17 11.500L13 15V12.500H5V15Z" fill="#4c74c4" stroke="#2c4480"/></svg></button>
              <button class="tool on" aria-label="Achsen"><svg viewBox="0 0 18 18"><path d="M4.500 4V13M4 4.500H14" fill="none" stroke="#445c88" stroke-width="1.500"/><path d="M13 1.500L17 4.500L13 7.500ZM1.500 12H7.500L4.500 17Z" fill="#4c74c4"/><path d="M3 3H6V6H3Z" fill="#445"/></svg></button>
              <button class="tool" aria-label="Zoom zurücksetzen"><svg viewBox="0 0 18 18"><circle cx="6" cy="9" r="4.500" fill="#e8f0ff" stroke="#333" stroke-width="1.500"/><path d="M9 12L13 16" stroke="#333" stroke-width="3"/><path d="M7 1L12 4L17 1L14 6L17 11L12 8L7 11L10 6Z" fill="#5c8ce0" stroke="#2c54a0"/></svg></button>
            </div>
          </div>
        </div>
      </div>
    </div>

    <footer class="buttons">
      <button class="tool" aria-label="Hilfe"><svg viewBox="0 0 18 18"><circle cx="9" cy="8" r="7" fill="#f4f4fc" stroke="#888" stroke-width="1.500"/><path d="M4 13L3 17L8 15" fill="#f4f4fc" stroke="#888"/><path d="M6.500 6Q7 3.500 9.500 4Q12.500 5 9 8.500V10M9 11V13" fill="none" stroke="#2c4488" stroke-width="2"/></svg></button>
      <button class="tool" aria-label="Zurück"><svg viewBox="0 0 18 18"><path d="M4.500 2.500H16.500V13.500H4.500Z" fill="#e8e8e8" stroke="#555"/><path d="M4 3H17" stroke="#2c3c68" stroke-width="3"/><path d="M1 11L7 6V9H13V13H7V16Z" fill="#8cb4f8" stroke="#28488c"/></svg></button>
      <button class="tool" aria-label="Weiter"><svg viewBox="0 0 18 18"><path d="M1.500 2.500H13.500V13.500H1.500Z" fill="#e8e8e8" stroke="#555"/><path d="M1 3H14" stroke="#2c3c68" stroke-width="3"/><path d="M17 11L11 6V9H5V13H11V16Z" fill="#8cb4f8" stroke="#28488c"/></svg></button>
      <button class="btn first" disabled>Berechnung</button>
      <button class="btn">Details...</button>
      <button class="btn">Nat. Anhang...</button>
      <button class="btn apart">Grafik</button>
      <span class="space"></span>
      <button class="btn small default">OK</button>
      <button class="btn small">Abbrechen</button>
    </footer>
    <p class="status">Nicht wirksame Breite (Öffnungsbreite) des rechten Steges</p>
  </section>
</body>
</html>
```

FILE: styles.css
```css
:root {
  --ui: Roboto, "Open Sans", sans-serif;
  --grid: Roboto, "Liberation Sans", sans-serif;
  --plain: "Liberation Sans", Arial, sans-serif;
  --line: #a0a0a0;
  --face: #f0f0f0;
  --violet: #a8a8e8;
}
* {
  box-sizing: border-box;
}
body {
  margin: 0;
  height: 100vh;
  display: flex;
  overflow: hidden;
  background: #fff;
  font-family: var(--ui);
  font-size: 12px;
  color: #000;
}
h1, h2, h3, p, ul {
  margin: 0;
  padding: 0;
  font-weight: normal;
  font-size: inherit;
}
ul {
  list-style: none;
}
a {
  color: inherit;
  text-decoration: none;
}
svg {
  display: block;
  flex: none;
}
button, select, input {
  font: inherit;
  color: inherit;
  margin: 0;
  border-radius: 0;
}
.defs {
  position: absolute;
}
.space {
  flex: 1;
}
.arrow {
  width: 10px;
  height: 10px;
}

/* navigator behind the dialog */
.navigator {
  flex: none;
  width: 236px;
  display: flex;
  flex-direction: column;
  background: #ced4e0;
  border-right: 1px solid #707078;
}
.nav-title {
  height: 18px;
  padding-right: 10px;
  display: flex;
  justify-content: space-between;
  line-height: 13px;
  color: #444;
  background: #b8c0cc;
}
.nav-frame {
  flex: 1;
  min-height: 0;
  display: flex;
  flex-direction: column;
  margin-right: 5px;
  border: solid #888;
  border-width: 1px 1px 1px 0;
}
.nav-main {
  flex: 1;
  min-height: 0;
  display: flex;
}
.nav-tree {
  flex: 1;
  min-width: 0;
  overflow: hidden;
  background: #fbfbf2;
}
.nav-tree li {
  display: flex;
  align-items: center;
  height: 18px;
  white-space: nowrap;
}
.nav-tree .root-name {
  height: 19px;
  padding-left: 5px;
  font-weight: bold;
}
.nav-tree .icon {
  width: 16px;
  height: 16px;
  margin-right: 4px;
  overflow: visible;
}
.nav-tree .twig + .icon {
  margin: 0 5px 0 -2px;
}
.nav-tree .twig {
  width: 24px;
  height: 18px;
}
.nav-tree .deep {
  width: 42px;
}
.nav-tree .stub {
  width: 4px;
  height: 18px;
}
.nav-tree text {
  font: 8px var(--plain);
  text-anchor: middle;
}
.nav-tree .long {
  font-size: 7px;
}
.nav-vscroll {
  width: 20px;
  padding: 0 7px 4px 3px;
  display: flex;
  align-items: flex-end;
  background: var(--face);
}
.nav-hscroll {
  height: 18px;
  padding-right: 24px;
  display: flex;
  align-items: center;
  justify-content: space-between;
  background: var(--face);
}
.nav-hscroll .thumb {
  width: 85px;
  height: 15px;
  background: #cdcdcd;
}
.nav-tabs {
  height: 23px;
  display: flex;
  gap: 13px;
  color: #555;
}
.tab {
  display: flex;
  align-items: center;
  gap: 2px;
}
.tab.active {
  width: 16px;
  height: 20px;
  margin-right: -5px;
  background: #f4f6fa;
  border-radius: 0 0 3px 0;
}

.workspace {
  flex: 1;
  min-width: 0;
}
.model {
  width: 100%;
  height: 100%;
}
.model text {
  font: 11px var(--plain);
}
.model .axis {
  font-size: 9px;
}

/* dialog window */
.dialog {
  position: absolute;
  left: 47px;
  right: 67px;
  top: 21px;
  display: flex;
  flex-direction: column;
  background: var(--face);
  border: 1px solid #666;
  box-shadow: 0 3px 14px rgba(0, 0, 0, 0.5);
}
.titlebar {
  height: 25px;
  padding: 0 9px 0 3px;
  display: flex;
  align-items: center;
  justify-content: space-between;
  background: #fff;
}
.close {
  padding: 0;
  border: none;
  background: none;
}
.menu {
  height: 20px;
  padding-left: 7px;
  display: flex;
  align-items: center;
  gap: 14px;
  background: #fff;
}
.dialog-body {
  display: flex;
  gap: 3px;
  margin: 1px 2px 0 1px;
}
.side {
  flex: none;
  width: 176px;
  display: flex;
  flex-direction: column;
  padding-top: 3px;
  border: solid var(--line);
  border-width: 1px 1px 1px 0;
}
.combo {
  position: relative;
  height: 21px;
}
.combo select {
  appearance: none;
  width: 100%;
  height: 100%;
  padding: 0 18px 0 3px;
  border: 1px solid #adadad;
  background: #e1e1e1;
  font-size: 11px;
}
.combo .chev {
  position: absolute;
  right: 3px;
  top: 5px;
  width: 10px;
  height: 10px;
}
.side-panel {
  flex: 1;
  display: flex;
  flex-direction: column;
  justify-content: space-between;
  margin: 2px 1px 0;
  border-top: 1px solid #888;
  background: #fbfbf2;
  font: 11px var(--grid);
}
.side-tree {
  overflow: hidden;
}
.side-tree li {
  display: flex;
  height: 16px;
  line-height: 16px;
  white-space: nowrap;
}
.side-tree .group {
  padding-left: 5px;
}
.side-tree svg {
  width: 20px;
  height: 16px;
}
.current {
  background: #efefef;
}
.side-scroll {
  height: 17px;
  padding: 0 4px;
  display: flex;
  align-items: center;
  background: var(--face);
}
.track {
  flex: 1;
}
.side-scroll .track {
  padding: 0 25px 0 4px;
}
.side-scroll .thumb {
  display: block;
  height: 15px;
  background: #cdcdcd;
}
.content {
  flex: 1;
  min-width: 0;
  display: flex;
  flex-direction: column;
  padding: 3px 3px 9px 0;
  border: solid var(--line);
  border-width: 1px 1px 1px 0;
}
.page-title {
  height: 20px;
  padding-left: 2px;
  line-height: 20px;
  background: #bfcddb;
}

/* design check table */
.checks {
  margin: 9px 5px 0 8px;
}
table {
  width: 100%;
  table-layout: fixed;
  border-collapse: separate;
  border-spacing: 0;
  font: 11px var(--grid);
  line-height: 15px;
  white-space: nowrap;
}
th, td {
  padding: 0 4px;
  overflow: hidden;
  font-weight: normal;
  border: solid var(--line);
  border-width: 0 1px 1px 0;
}
.check-table {
  border: solid var(--line);
  border-width: 1px 0 0 1px;
}
.check-table td, .check-table th {
  height: 16px;
}
.c-nr { width: 45px; }
.c-a { width: 60px; }
.c-b { width: 54px; }
.c-c { width: 84px; }
.c-d { width: 24px; }
.check-table .letters th {
  height: 14px;
  line-height: 13px;
  background: #e1e1e1;
  border-bottom-color: #555;
  box-shadow: inset 1px 1px #fff;
}
.check-table .letters .picked {
  color: #fff;
  background: #0078d7;
}
.check-table .letters .corner {
  line-height: 13px;
  padding-top: 8px;
  box-shadow: none;
}
.check-table .names th {
  background: var(--face);
}
.check-table .names.top th {
  height: 17px;
  border-bottom: none;
}
.check-table tbody th {
  background: #e1e1e1;
  border-color: #777;
  box-shadow: inset 1px 1px #fff;
}
.section td { background: #e1e1e1; }
.cream td { background: #fffbf0; }
.active td { background: #fff; }
.beige td { background: #ece7de; }
.check-table .active th { background: #0078d7; }
.check-table .rest th, .check-table .rest td {
  height: 97px;
  background: #e8eeee;
  border-bottom: none;
  box-shadow: none;
}
.check-table .rest th { background: #e1e1e1; }
.num { text-align: right; }
.mid { text-align: center; }
.check-table .limit {
  padding: 0 3px;
  text-align: right;
}
.ratio {
  display: flex;
  align-items: center;
  justify-content: space-between;
  padding-left: 1px;
}
.bar {
  height: 11px;
}
.ok { background: #c0ffc0; }
.over {
  background: linear-gradient(#a8a8a8, #a8a8a8) 36px 0 / 1px 100% no-repeat #ffc0c0;
}
.bad { color: #f00020; }
.focus {
  outline: 1px dotted #000;
  outline-offset: -1px;
}
.check-bar {
  height: 30px;
  padding-right: 3px;
  display: flex;
  align-items: center;
  background: #eff3fa;
  border-right: 1px solid var(--violet);
  border-bottom: 1px solid var(--violet);
}
.max {
  flex: 1;
  display: flex;
  align-items: center;
  gap: 2px;
  padding-left: 131px;
  font: 11px var(--plain);
}
.max label {
  margin-right: 2px;
}
.max input {
  height: 18px;
  padding: 0 3px;
  text-align: right;
  background: #eff3fa;
  border: solid;
  border-width: 1px;
  border-color: var(--line) #fff #fff var(--line);
}
.max-value { width: 82px; }
.max .max-limit { width: 24px; }
.tools {
  display: flex;
  gap: 2px;
}
.tools.wide {
  margin: 0 4px 0 29px;
}
.filter {
  width: 74px;
  margin-right: 4px;
}
.combo.filter select {
  font-size: 12px;
}
.tool {
  width: 25px;
  height: 21px;
  padding: 0;
  display: flex;
  align-items: center;
  justify-content: center;
  background: #e1e1e1;
  border: 1px solid #adadad;
}
.tool svg {
  width: 18px;
  height: 18px;
}
.tool.on {
  background: #cce4f7;
  border-color: #005499;
}
.tool.off {
  background: #ccc;
  border-color: #bfbfbf;
}

/* intermediate values and cross-section */
.lower {
  flex: 1;
  display: flex;
  gap: 9px;
  margin: 10px 5px 0 8px;
}
.details {
  flex: 1;
  min-width: 0;
  border-right: 1px solid var(--violet);
  border-bottom: 1px solid var(--violet);
}
.details h3 {
  height: 16px;
  padding-left: 2px;
  font: 11px/16px var(--plain);
  color: #1c3c6c;
  background: #dce6f4;
}
.details-body {
  display: flex;
  padding-bottom: 4px;
}
.value-table {
  flex: 1;
  min-width: 0;
  background: #fff;
  border: solid var(--line);
  border-width: 1px 0 0 1px;
}
.value-table td {
  height: 16px;
}
.value-table td:first-child {
  padding-left: 0;
}
.value-table td:nth-child(3) {
  text-align: right;
}
.value-table svg {
  float: left;
  width: 26px;
  height: 15px;
}
.value-table .box {
  width: 15px;
}
.marked { background: #ebebeb; }
.v-sym { width: 72px; }
.v-num { width: 66px; }
.v-unit { width: 54px; }
.v-lim { width: 48px; }
.v-ref { width: 72px; }
sub, sup {
  font-size: 10px;
  line-height: 1px;
  margin-left: 1px;
}
sub { vertical-align: -2px; }
sup { vertical-align: 3px; }
.vscroll {
  width: 16px;
  padding: 4px 0;
  display: flex;
  flex-direction: column;
  align-items: center;
  background: var(--face);
}
.vscroll .track {
  width: 100%;
  display: flex;
  flex-direction: column;
  justify-content: flex-end;
  padding-bottom: 73px;
}
.vscroll .thumb {
  height: 86px;
  background: #cdcdcd;
}
.profile {
  flex: none;
  width: 210px;
  display: flex;
  flex-direction: column;
  border: solid var(--violet);
  border-width: 0 1px 1px 0;
}
.profile-view {
  flex: 1;
  border: solid #777;
  border-width: 1px 0 0 1px;
  background: linear-gradient(60deg, #fff 30%, #faf6e4);
  font: 11px/16px var(--plain);
}
.profile-view h3 {
  padding-left: 4px;
}
.profile-view p {
  padding-right: 6px;
  text-align: right;
}
.drawing {
  width: 100%;
}
.drawing text {
  font: 9px var(--plain);
}
.drawing .ax {
  font: bold 9px "Liberation Mono", monospace;
  fill: #f0f;
}
.profile-bar {
  height: 28px;
  padding: 0 3px 0 4px;
  display: flex;
  align-items: center;
  gap: 5px;
  background: #eff3fa;
}

/* bottom row */
.buttons {
  height: 39px;
  margin: 1px 0 0;
  padding: 2px 10px 0 9px;
  display: flex;
  align-items: center;
  gap: 9px;
  border-top: 2px solid #fff;
  border-bottom: 1px solid var(--line);
}
.buttons .tool + .tool {
  margin-right: -4px;
}
.btn {
  width: 81px;
  height: 22px;
  padding: 0;
  font-size: 11px;
  background: #e1e1e1;
  border: 1px solid #adadad;
}
.btn:disabled {
  color: #838383;
  background: #ccc;
  border-color: #bfbfbf;
}
.btn.first { margin-left: 77px; }
.btn.apart { margin-left: 90px; }
.btn.small { width: 73px; }
.btn.default { border: 2px solid #0078d7; }
.status {
  height: 21px;
  padding-left: 1px;
  font: 11px/19px var(--plain);
}
```
